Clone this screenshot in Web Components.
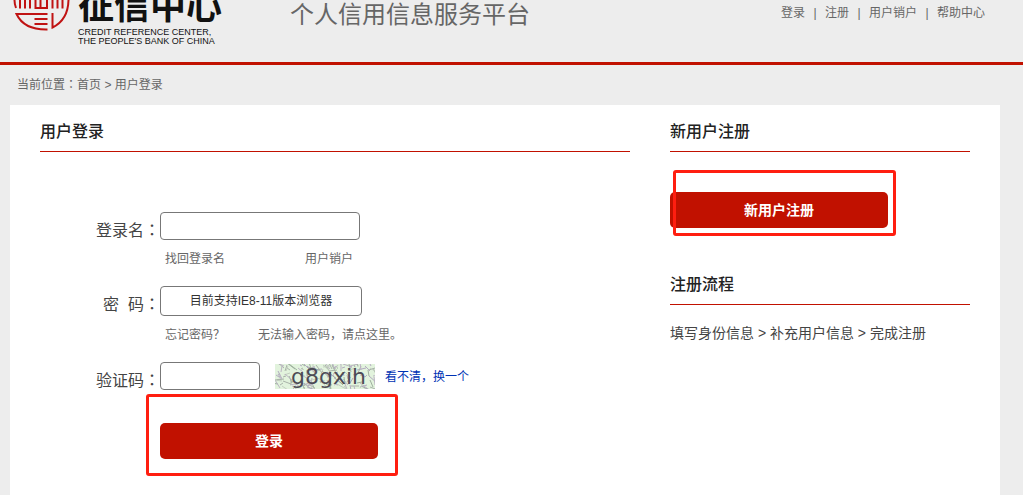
<!DOCTYPE html>
<html lang="zh-CN">
<head>
<meta charset="utf-8">
<title>用户登录</title>
<style>
    body {
        margin: 0;
        min-height: 100vh;
        display: flex;
        flex-direction: column;
        background: #ededed;
        color: #333;
        font-family: "Liberation Sans", "Noto Sans CJK SC", sans-serif;
        font-size: 12px;
        --rojo: #c11100;
    }
</style>
</head>
<body>
    <cr-header></cr-header>
    <cr-breadcrumb></cr-breadcrumb>
    <cr-panel>
        <cr-section titulo="用户登录">
            <cr-login-form></cr-login-form>
        </cr-section>
        <div slot="lateral">
            <cr-section titulo="新用户注册" class="registro">
                <cr-mark style="--arriba: -22px; --derecha: -8px; --abajo: -8px; --izquierda: 3px">
                    <cr-button>新用户注册</cr-button>
                </cr-mark>
            </cr-section>
            <cr-section titulo="注册流程" class="flujo">
                <cr-steps>填写身份信息 &gt; 补充用户信息 &gt; 完成注册</cr-steps>
            </cr-section>
        </div>
    </cr-panel>

<script>
class Header extends HTMLElement {
    constructor() {
        super();
        this.shadow = this.attachShadow({mode: 'open'});
    }

    connectedCallback() {
        this.shadow.innerHTML = `
        <style>
        :host {
            display: block;
            border-bottom: 3px solid var(--rojo);
        }
        header {
            display: flex;
            height: 62px;
            padding: 0 38px 0 12px;
            overflow: hidden;
            color: #666;
        }
        .logo {
            display: flex;
            gap: 6px;
            width: 278px;
            color: #111;
        }
        .logo svg {
            width: 60px;
            height: 34px;
        }
        .nombre {
            display: flex;
            flex-direction: column;
            justify-content: flex-end;
            height: 46px;
            white-space: nowrap;
        }
        .chino {
            margin-bottom: 5px;
            font: 700 36px/40px "Noto Sans CJK SC", sans-serif;
        }
        .ingles {
            font-size: 9px;
            line-height: 9px;
        }
        h1 {
            margin: 0;
            flex: 1;
            font-size: 24px;
            font-weight: 400;
            line-height: 30px;
        }
        nav {
            display: flex;
            line-height: 26px;
        }
        nav a {
            color: inherit;
            text-decoration: none;
        }
        nav span {
            width: 20px;
            text-align: center;
        }
        </style>
        <header>
            <div class="logo">
                <svg viewBox="0 0 60 34" fill="none" stroke="#c01313" stroke-width="2" aria-hidden="true">
                    <path d="M2.500 0Q2.500 4 4 8M8 0V8.500M13 0V8.500M18 0V8.500M40.500 0V8.500M45.500 0V8.500M50.500 0V8.500"/>
                    <path d="M23.500 0V8H35V0M28.500 0V8"/>
                    <path d="M35.500 14H4.500Q12 30 35.500 29.500M22.500 19H35.500M22.500 24H35.500"/>
                    <path d="M40.500 13V27.500Q56 20 56.500 0"/>
                </svg>
                <div class="nombre">
                    <div class="chino">征信中心</div>
                    <div class="ingles">CREDIT REFERENCE CENTER,</div>
                    <div class="ingles">THE PEOPLE'S BANK OF CHINA</div>
                </div>
            </div>
            <h1>个人信用信息服务平台</h1>
            <nav>
                <a href="#">登录</a><span>|</span>
                <a href="#">注册</a><span>|</span>
                <a href="#">用户销户</a><span>|</span>
                <a href="#">帮助中心</a>
            </nav>
        </header>
        `;
    }
}

class Breadcrumb extends HTMLElement {
    constructor() {
        super();
        this.shadow = this.attachShadow({mode: 'open'});
    }

    connectedCallback() {
        this.shadow.innerHTML = `
        <style>
        :host {
            display: block;
            padding: 0 17px;
            line-height: 40px;
            color: #666;
        }
        a {
            color: inherit;
            text-decoration: none;
        }
        .dos-puntos {
            font-family: "Noto Sans CJK TC", sans-serif;
            line-height: 1;
        }
        </style>
        <nav>当前位置<span class="dos-puntos" lang="zh-TW">：</span><a href="#">首页</a> &gt; <a href="#">用户登录</a></nav>
        `;
    }
}

class Panel extends HTMLElement {
    constructor() {
        super();
        this.shadow = this.attachShadow({mode: 'open'});
    }

    connectedCallback() {
        this.shadow.innerHTML = `
        <style>
        :host {
            display: grid;
            grid-template-columns: 1fr 300px;
            gap: 40px;
            flex: 1;
            margin: 0 23px 0 10px;
            padding: 12px 30px 0;
            background: #fff;
        }
        </style>
        <slot></slot>
        <slot name="lateral"></slot>
        `;
    }
}

class Section extends HTMLElement {
    constructor() {
        super();
        this.shadow = this.attachShadow({mode: 'open'});
    }

    connectedCallback() {
        const titulo = this.getAttribute('titulo');
        this.shadow.innerHTML = `
        <style>
        :host {
            display: block;
        }
        h2 {
            margin: 0;
            padding-bottom: 4px;
            border-bottom: 1px solid var(--rojo);
            color: #222;
            font-size: 16px;
            font-weight: 500;
            line-height: 30px;
        }
        .cuerpo {
            padding-top: 60px;
        }
        :host(.registro) .cuerpo {
            padding: 40px 0 42px;
        }
        :host(.flujo) .cuerpo {
            padding-top: 18px;
        }
        </style>
        <h2>${titulo}</h2>
        <div class="cuerpo"><slot></slot></div>
        `;
    }
}

class Steps extends HTMLElement {
    constructor() {
        super();
        this.shadow = this.attachShadow({mode: 'open'});
    }

    connectedCallback() {
        this.shadow.innerHTML = `
        <style>
        :host {
            display: block;
            color: #444;
            font-size: 14px;
            line-height: 20px;
        }
        </style>
        <slot></slot>
        `;
    }
}

class Button extends HTMLElement {
    constructor() {
        super();
        this.shadow = this.attachShadow({mode: 'open'});
    }

    connectedCallback() {
        this.shadow.innerHTML = `
        <style>
        :host {
            display: block;
        }
        button {
            display: block;
            width: 218px;
            height: 36px;
            padding: 0 0 2px;
            border: 0;
            border-radius: 5px;
            background: var(--rojo);
            color: #fff;
            font: inherit;
            font-size: 14px;
            font-weight: 700;
        }
        </style>
        <button type="button"><slot></slot></button>
        `;
    }
}

// Red frame laid over whatever is slotted in
class Mark extends HTMLElement {
    constructor() {
        super();
        this.shadow = this.attachShadow({mode: 'open'});
    }

    connectedCallback() {
        this.shadow.innerHTML = `
        <style>
        :host {
            display: block;
            position: relative;
            width: fit-content;
        }
        .marco {
            position: absolute;
            top: var(--arriba);
            right: var(--derecha);
            bottom: var(--abajo);
            left: var(--izquierda);
            border: 3px solid #ff1e10;
            border-radius: 3px;
            pointer-events: none;
        }
        </style>
        <slot></slot>
        <div class="marco"></div>
        `;
    }
}

class Field extends HTMLElement {
    constructor() {
        super();
        this.shadow = this.attachShadow({mode: 'open'});
    }

    connectedCallback() {
        const etiqueta = this.getAttribute('etiqueta');
        const tipo = this.getAttribute('tipo') || 'text';
        const aviso = this.getAttribute('aviso') || '';
        this.shadow.innerHTML = `
        <style>
        :host {
            display: flex;
            align-items: flex-start;
        }
        label {
            width: 120px;
            color: #444;
            font-size: 16px;
            line-height: 38px;
            text-align: right;
            white-space: pre;
        }
        .dos-puntos {
            font-family: "Noto Sans CJK TC", sans-serif;
            line-height: 1;
        }
        .fila {
            display: flex;
        }
        input {
            box-sizing: border-box;
            width: 200px;
            height: 28px;
            padding: 0 8px;
            border: 1px solid #777;
            border-radius: 4px;
            background: #fff;
            font: inherit;
            text-align: center;
        }
        input::placeholder {
            color: #333;
            opacity: 1;
        }
        :host([tipo="password"]) input {
            width: 202px;
            height: 30px;
        }
        :host([corto]) input {
            width: 100px;
        }
        </style>
        <label for="campo">${etiqueta}<span class="dos-puntos" lang="zh-TW">：</span></label>
        <div>
            <div class="fila">
                <input id="campo" type="${tipo}" placeholder="${aviso}">
                <slot></slot>
            </div>
            <slot name="ayuda"></slot>
        </div>
        `;
    }
}

class Captcha extends HTMLElement {
    constructor() {
        super();
        this.shadow = this.attachShadow({mode: 'open'});
    }

    // short strokes with a fixed seed, so the noise is stable between loads
    ruido() {
        const colores = ['#a9b3a9', '#b3abc0', '#c3cfc0', '#9eb09e', '#bcb4c4'];
        let semilla = 17;
        const azar = (n) => {
            semilla = (semilla * 1103515 + 12345) % 2147483648;
            return Math.floor(semilla / 2147483648 * n);
        };
        let lineas = '';
        for (let i = 0; i < 170; i++) {
            const x = azar(104) - 4;
            const y = azar(29) - 4;
            const dx = azar(13) - 3;
            const dy = azar(11) - 2;
            lineas += `<path d="M${x} ${y}l${dx} ${dy}" stroke="${colores[azar(5)]}"/>`;
        }
        return lineas;
    }

    connectedCallback() {
        this.shadow.innerHTML = `
        <style>
        :host {
            display: block;
            margin: 2px 10px 0 15px;
        }
        svg {
            display: block;
            width: 100px;
            height: 25px;
            background: #e2f3dd;
        }
        text {
            fill: #4c4b55;
            font: 22px "DejaVu Sans", sans-serif;
        }
        </style>
        <svg viewBox="0 0 100 25" role="img" aria-label="验证码">
            ${this.ruido()}
            <text x="16" y="20">${this.getAttribute('codigo')}</text>
        </svg>
        `;
    }
}

class LoginForm extends HTMLElement {
    constructor() {
        super();
        this.shadow = this.attachShadow({mode: 'open'});
    }

    connectedCallback() {
        this.shadow.innerHTML = `
        <style>
        :host {
            display: block;
        }
        form {
            display: flex;
            flex-direction: column;
            gap: 8px;
        }
        a {
            color: #666;
            text-decoration: none;
        }
        .ayuda {
            display: flex;
            padding-left: 5px;
            line-height: 38px;
        }
        .cuenta {
            gap: 80px;
        }
        .clave {
            gap: 33px;
        }
        .cambiar {
            color: #0033b4;
            line-height: 30px;
        }
        cr-mark {
            margin: 15px 0 0 120px;
        }
        </style>
        <form>
            <cr-field etiqueta="登录名">
                <div class="ayuda cuenta" slot="ayuda">
                    <a href="#">找回登录名</a>
                    <a href="#">用户销户</a>
                </div>
            </cr-field>
            <cr-field etiqueta="密  码" tipo="password" aviso="目前支持IE8-11版本浏览器">
                <div class="ayuda clave" slot="ayuda">
                    <a href="#">忘记密码？</a>
                    <a href="#">无法输入密码，请点这里。</a>
                </div>
            </cr-field>
            <cr-field etiqueta="验证码" corto>
                <cr-captcha codigo="g8gxih"></cr-captcha>
                <a class="cambiar" href="#">看不清，换一个</a>
            </cr-field>
            <cr-mark style="--arriba: -29px; --derecha: -20px; --abajo: -17px; --izquierda: -14px">
                <cr-button>登录</cr-button>
            </cr-mark>
        </form>
        `;
    }
}

customElements.define('cr-header', Header);
customElements.define('cr-breadcrumb', Breadcrumb);
customElements.define('cr-panel', Panel);
customElements.define('cr-section', Section);
customElements.define('cr-steps', Steps);
customElements.define('cr-button', Button);
customElements.define('cr-mark', Mark);
customElements.define('cr-field', Field);
customElements.define('cr-captcha', Captcha);
customElements.define('cr-login-form', LoginForm);
</script>
</body>
</html>
